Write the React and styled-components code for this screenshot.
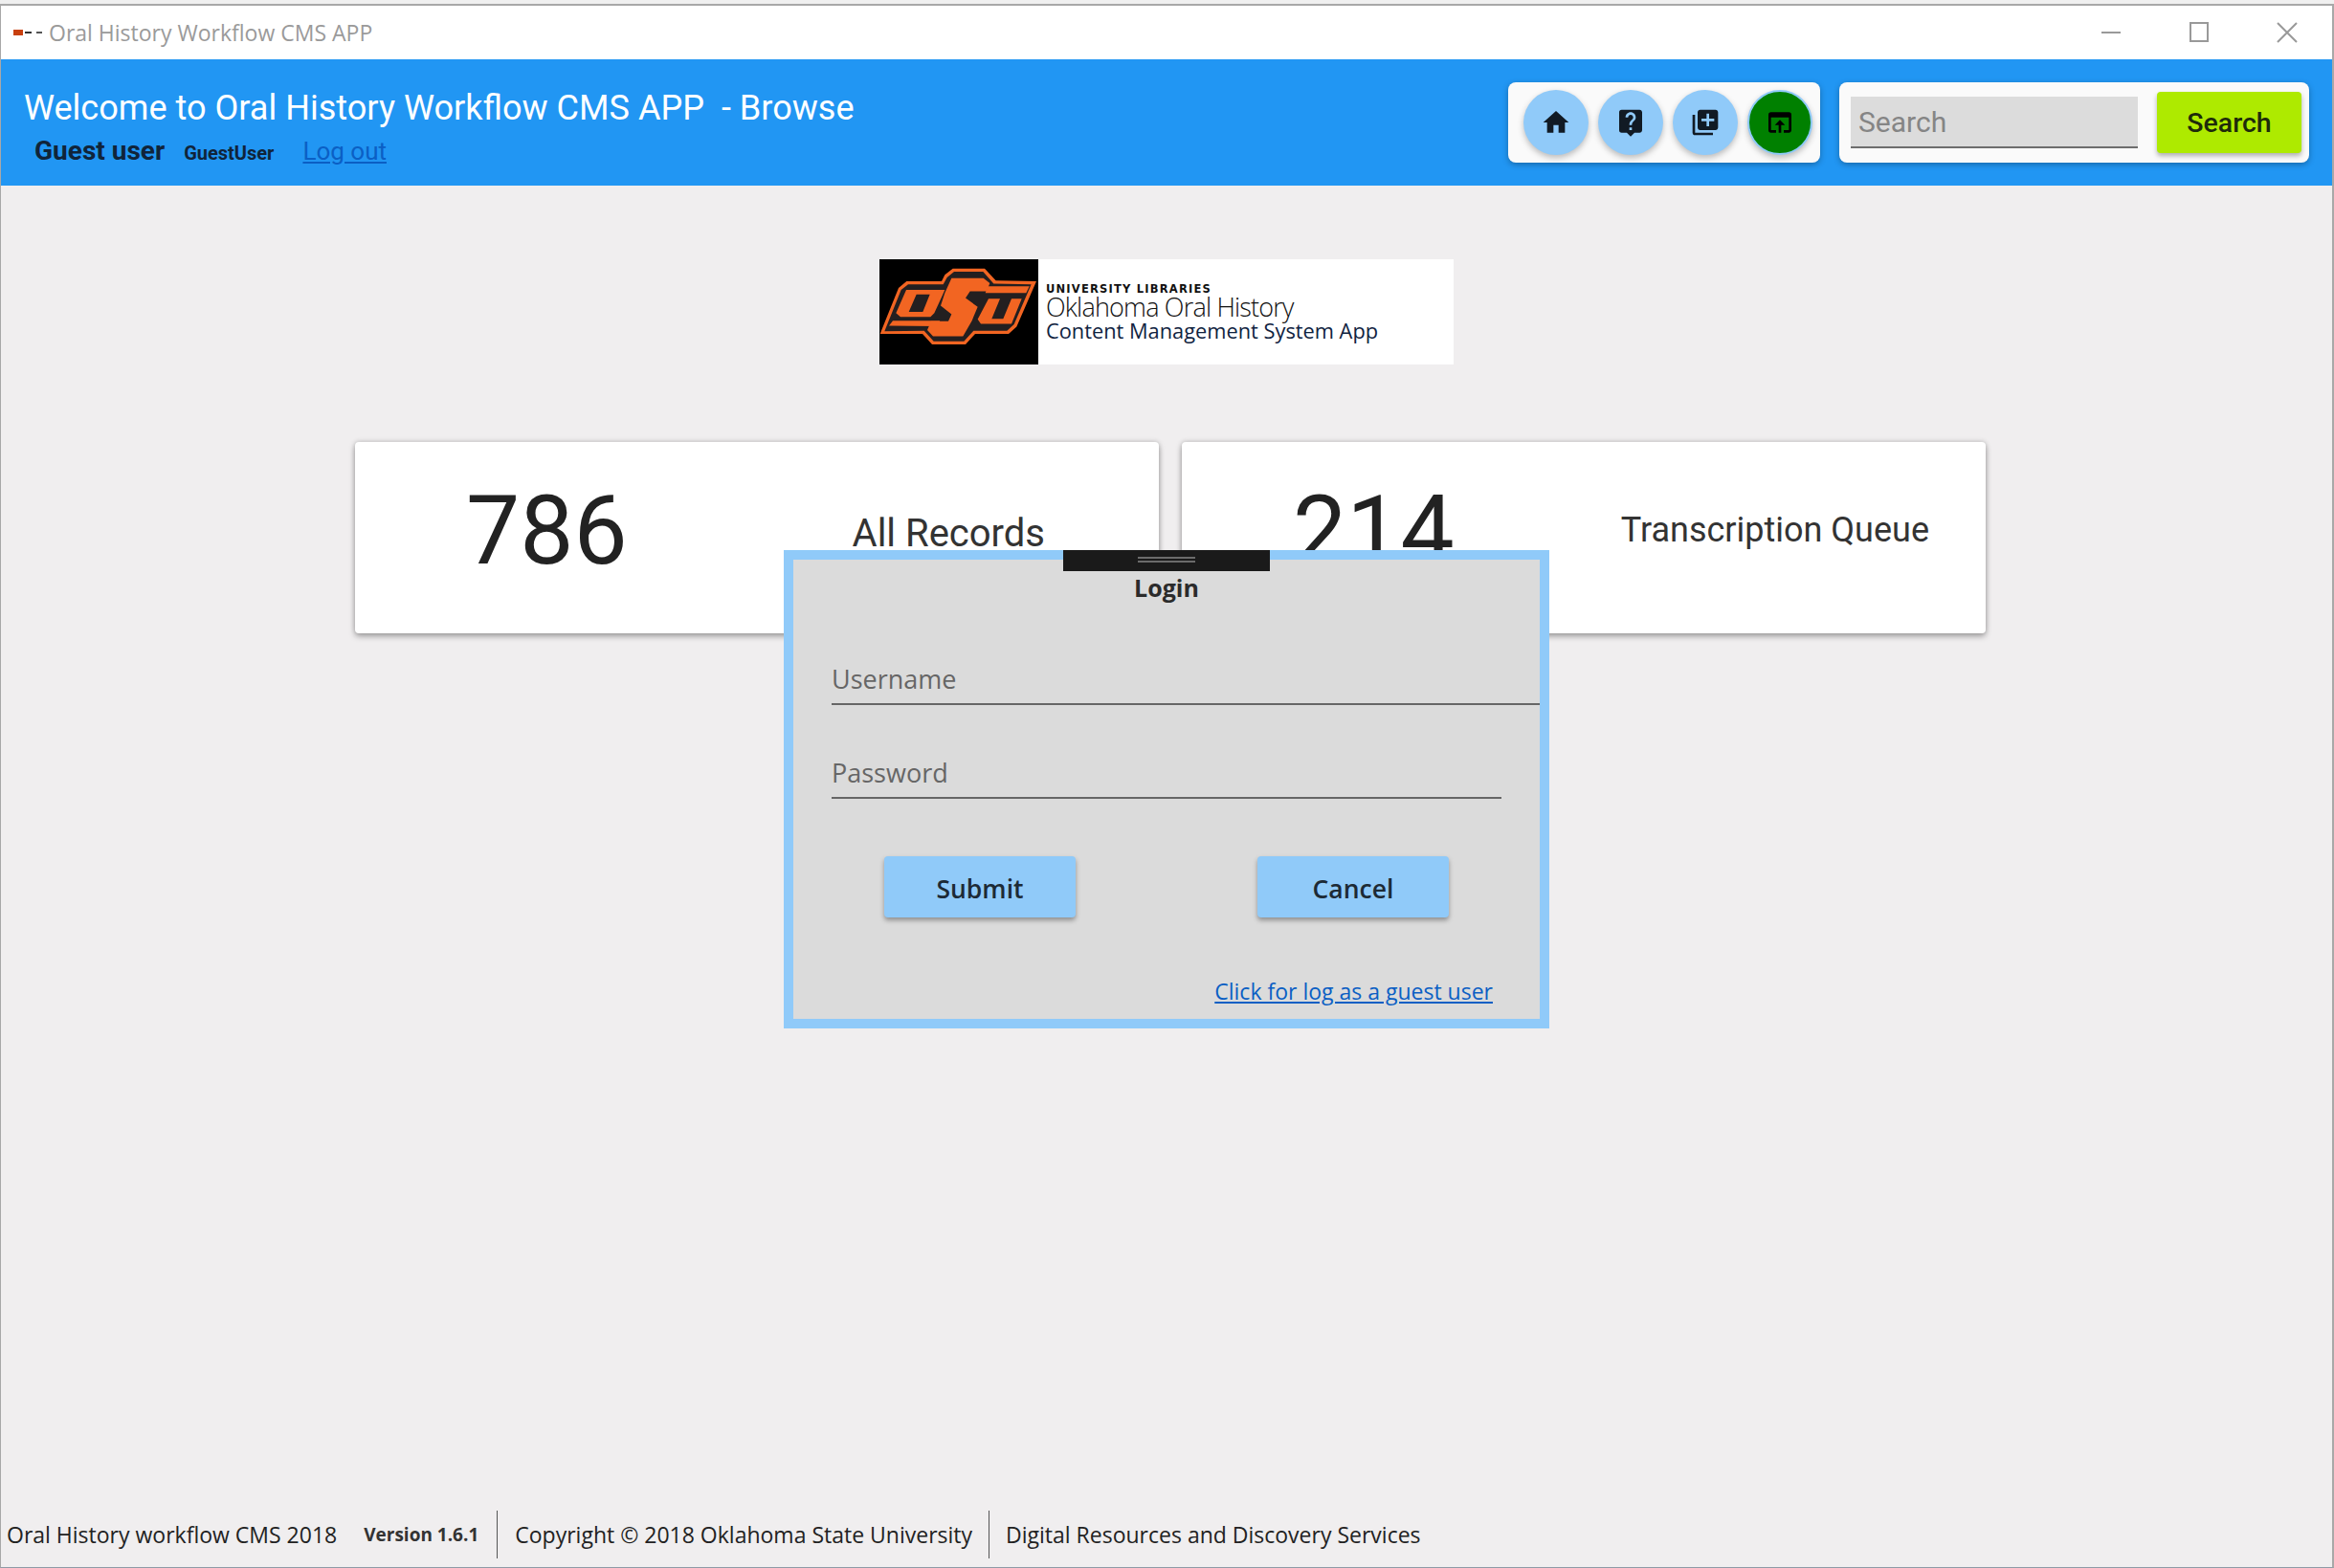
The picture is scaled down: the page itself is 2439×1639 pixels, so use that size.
import React from 'react'
import styled, { createGlobalStyle } from 'styled-components'
import { MdHome, MdLiveHelp, MdLibraryAdd, MdOpenInBrowser } from 'react-icons/md'

const Global = createGlobalStyle`
html,body{
margin:0;
padding:0;
height:1639px;
overflow:hidden;
background:#f0f0f0;
}
*{box-sizing:border-box;}
`

const Win = styled.div`
margin-top:4px;
height:1635px;
width:2439px;
display:flex;
flex-direction:column;
position:relative;
background:#f0eeef;
border-top:2px solid #a8a8a8;
border-left:1px solid #a8a8a8;
border-right:2px solid #a8a8a8;
border-bottom:1px solid #8f9aa6;
`
const TitleBar = styled.div`
height:56px;
flex:none;
background:#fff;
display:flex;
align-items:center;
padding-left:13px;
font-family:"Open Sans",sans-serif;
font-size:23px;
color:#9a9a9a;
`
const AppName = styled.span`
margin-left:7px;
flex:1;
`
const WinBtn = styled.svg`
width:22px;
height:22px;
margin-right:${(p) => p.$mr}px;
stroke:#999;
stroke-width:2;
fill:none;
`
const Header = styled.header`
height:132px;
flex:none;
background:#2196f3;
display:flex;
align-items:center;
justify-content:space-between;
padding:0 24px 0 24px;
font-family:Roboto,sans-serif;
`
const Welcome = styled.div`
color:#fff;
font-size:36.1px;
line-height:42px;
margin-top:9px;
white-space:pre;
`
const UserRow = styled.div`
display:flex;
align-items:baseline;
padding-left:11px;
margin-top:7px;
color:#10243a;
`
const UserName = styled.b`
font-size:28px;
font-weight:700;
margin-right:20px;
`
const UserId = styled.b`
font-size:20px;
font-weight:700;
margin-right:30px;
`
const LogOut = styled.a`
font-size:26px;
color:#0b5fc4;
text-decoration:underline;
`
const HeaderRight = styled.div`
display:flex;
gap:20px;
`
const Panel = styled.div`
height:84px;
background:#fafafa;
border-radius:8px;
box-shadow:0 2px 6px rgba(0,0,0,.3);
display:flex;
align-items:center;
`
const IconPanel = styled(Panel)`
width:326px;
padding-left:16px;
gap:10px;
`
const RoundBtn = styled.button`
width:68px;
height:68px;
border-radius:50%;
padding:0;
display:flex;
align-items:center;
justify-content:center;
font-size:32px;
color:${(p) => (p.$on ? '#000' : '#111a24')};
background:${(p) => (p.$on ? '#008000' : '#90caf9')};
border:${(p) => (p.$on ? '2px solid #90caf9' : 'none')};
box-shadow:0 3px 6px rgba(0,0,0,.25);
`
const SearchPanel = styled(Panel)`
width:491px;
padding-left:12px;
`
const SearchInput = styled.input`
width:300px;
height:54px;
border:none;
border-bottom:2px solid #6e6e6e;
background:#dcdcdc;
padding:0 8px;
font-family:Roboto,sans-serif;
font-size:30px;
outline:none;
&::placeholder{color:#858585;opacity:1;}
`
const SearchBtn = styled.button`
width:151px;
height:64px;
margin-left:20px;
border:none;
border-radius:4px;
background:#aeea00;
color:#1e2b0a;
font-family:Roboto,sans-serif;
font-size:28.5px;
font-weight:500;
box-shadow:0 3px 5px rgba(0,0,0,.3);
`
const Main = styled.main`
flex:1;
display:flex;
flex-direction:column;
`
const Logo = styled.div`
align-self:flex-start;
margin:77px 0 0 918px;
width:600px;
height:110px;
background:#fff;
display:flex;
`
const LogoMark = styled.div`
width:166px;
height:110px;
flex:none;
background:#000;
`
const LogoText = styled.div`
padding:26px 0 0 8px;
color:#111;
`
const LogoLib = styled.div`
font-family:"DejaVu Sans",sans-serif;
font-size:11.5px;
line-height:11px;
font-weight:700;
letter-spacing:1.2px;
`
const LogoName = styled.div`
font-family:"Open Sans",sans-serif;
font-weight:300;
font-size:27px;
line-height:26px;
letter-spacing:-.8px;
`
const LogoSub = styled.div`
font-family:"Open Sans",sans-serif;
font-size:21.8px;
line-height:24px;
color:#10233f;
`
const Cards = styled.div`
display:flex;
gap:24px;
margin:81px 0 0 370px;
`
const Card = styled.div`
width:840px;
height:200px;
background:#fff;
border-radius:4px;
box-shadow:0 3px 6px rgba(0,0,0,.35),0 -1px 5px rgba(0,0,0,.12);
display:flex;
justify-content:space-between;
padding:33px ${(p) => p.$pr}px 0 116px;
font-family:Roboto,sans-serif;
color:#222;
`
const Count = styled.div`
font-size:100px;
line-height:120px;
`
const CardLabel = styled.div`
font-size:${(p) => p.$size}px;
line-height:50px;
margin-top:${(p) => p.$mt}px;
color:#333;
`
const Modal = styled.div`
position:absolute;
left:818px;
top:569px;
width:800px;
height:500px;
background:#dbdbdb;
border:10px solid #90caf9;
padding-top:13px;
font-family:"Open Sans",sans-serif;
`
const Handle = styled.div`
position:absolute;
top:-10px;
left:282px;
width:216px;
height:22px;
background:#1a1a1a;
display:flex;
flex-direction:column;
align-items:center;
gap:2px;
padding-top:7px;
&::before,&::after{
content:'';
width:60px;
height:2px;
background:#6b6b6b;
}
`
const ModalTitle = styled.div`
text-align:center;
font-size:25px;
line-height:32px;
font-weight:700;
color:#2b2b2b;
`
const Field = styled.div`
margin:${(p) => p.$mt}px 0 0 40px;
width:${(p) => p.$w}px;
height:57px;
padding-top:10px;
border-bottom:2px solid #666;
font-size:27px;
line-height:40px;
color:#666;
`
const ModalBtns = styled.div`
display:flex;
gap:190px;
margin:60px 0 0 95px;
`
const ModalBtn = styled.button`
width:200px;
height:64px;
border:none;
border-radius:4px;
padding:3px 0 0;
background:#90caf9;
color:#1d2a36;
font-family:"Open Sans",sans-serif;
font-size:26.5px;
font-weight:600;
box-shadow:0 3px 5px rgba(0,0,0,.35);
`
const GuestLink = styled.a`
display:block;
margin:60px 49px 0 0;
text-align:right;
font-size:23px;
line-height:34px;
color:#0b5fc4;
text-decoration:underline;
`
const Footer = styled.footer`
height:59px;
flex:none;
display:flex;
align-items:flex-start;
padding-left:6px;
font-family:"Open Sans",sans-serif;
font-size:23px;
color:#222;
`
const FooterCell = styled.div`
height:50px;
display:flex;
align-items:center;
padding:0 ${(p) => p.$pr}px 0 ${(p) => p.$pl}px;
border-left:${(p) => (p.$line ? '1px solid #555' : 'none')};
`
const Version = styled.b`
font-size:19px;
font-weight:700;
margin-left:28px;
color:#333;
`

function OsuMark() {
    return (
        <svg viewBox="0 0 498 336" width="100%" height="100%" preserveAspectRatio="none">
            <polygon fill="#f26522" points="2,238 60,92 85,70 195,70 205,50 230,30 330,30 365,68 492,70 430,215 405,238 300,238 270,272 165,272 135,238" />
            <polygon fill="#231f20" points="16,230 68,98 90,80 200,80 212,58 234,40 325,40 358,78 476,80 422,208 400,228 295,228 265,262 170,262 140,228" />
            <path fill="#f26522" fillRule="evenodd" d="M52 172 L84 98 L205 98 L196 118 L172 172 L160 184 L66 184 Z M92 168 L136 168 L158 112 L116 112 Z" />
            <polygon fill="#f26522" points="30,212 42,196 190,196 178,214" />
            <polygon fill="#f26522" points="205,108 226,60 326,60 346,76 336,102 284,102 270,124 308,152 290,196 262,246 168,246 150,226 162,198 216,198 226,176 192,148" />
            <polygon fill="#f26522" points="342,126 378,126 352,190 388,190 414,126 446,126 414,206 318,206 308,192" />
            <polygon fill="#f26522" points="340,86 470,86 460,108 332,108" />
        </svg>
    )
}

function App() {
  return (
    <Win>
        <Global/>
        <TitleBar>
            <svg width="30" height="8" viewBox="0 0 30 8">
                <rect width="10" height="6" y="1" fill="#c8400f"/>
                <rect x="12" y="3" width="7" height="2" fill="#333"/>
                <rect x="24" y="3" width="6" height="2" fill="#555"/>
            </svg>
            <AppName>Oral History Workflow CMS APP</AppName>
            <WinBtn $mr={70} viewBox="0 0 22 22"><path d="M1 11h20"/></WinBtn>
            <WinBtn $mr={70} viewBox="0 0 22 22"><rect x="2" y="1" width="18" height="19"/></WinBtn>
            <WinBtn $mr={36} viewBox="0 0 22 22"><path d="M1 1l20 20M21 1L1 21"/></WinBtn>
        </TitleBar>
        <Header>
            <div>
                <Welcome>Welcome to Oral History Workflow CMS APP  - Browse</Welcome>
                <UserRow>
                    <UserName>Guest user</UserName>
                    <UserId>GuestUser</UserId>
                    <LogOut>Log out</LogOut>
                </UserRow>
            </div>
            <HeaderRight>
                <IconPanel>
                    <RoundBtn><MdHome/></RoundBtn>
                    <RoundBtn><MdLiveHelp/></RoundBtn>
                    <RoundBtn><MdLibraryAdd/></RoundBtn>
                    <RoundBtn $on><MdOpenInBrowser/></RoundBtn>
                </IconPanel>
                <SearchPanel>
                    <SearchInput placeholder='Search'/>
                    <SearchBtn>Search</SearchBtn>
                </SearchPanel>
            </HeaderRight>
        </Header>
        <Main>
            <Logo>
                <LogoMark><OsuMark/></LogoMark>
                <LogoText>
                    <LogoLib>UNIVERSITY LIBRARIES</LogoLib>
                    <LogoName>Oklahoma Oral History</LogoName>
                    <LogoSub>Content Management System App</LogoSub>
                </LogoText>
            </Logo>
            <Cards>
                <Card $pr={119}>
                    <Count>786</Count>
                    <CardLabel $size={40} $mt={38}>All Records</CardLabel>
                </Card>
                <Card $pr={59}>
                    <Count>214</Count>
                    <CardLabel $size={36} $mt={34}>Transcription Queue</CardLabel>
                </Card>
            </Cards>
        </Main>
        <Modal>
            <Handle/>
            <ModalTitle>Login</ModalTitle>
            <Field $mt={50} $w={740}>Username</Field>
            <Field $mt={41} $w={700}>Password</Field>
            <ModalBtns>
                <ModalBtn>Submit</ModalBtn>
                <ModalBtn>Cancel</ModalBtn>
            </ModalBtns>
            <GuestLink>Click for log as a guest user</GuestLink>
        </Modal>
        <Footer>
            <FooterCell $pl={0} $pr={19}>Oral History workflow CMS 2018<Version>Version 1.6.1</Version></FooterCell>
            <FooterCell $line $pl={18} $pr={17}>Copyright © 2018 Oklahoma State University</FooterCell>
            <FooterCell $line $pl={17} $pr={0}>Digital Resources and Discovery Services</FooterCell>
        </Footer>
    </Win>
  )
}

export default App
